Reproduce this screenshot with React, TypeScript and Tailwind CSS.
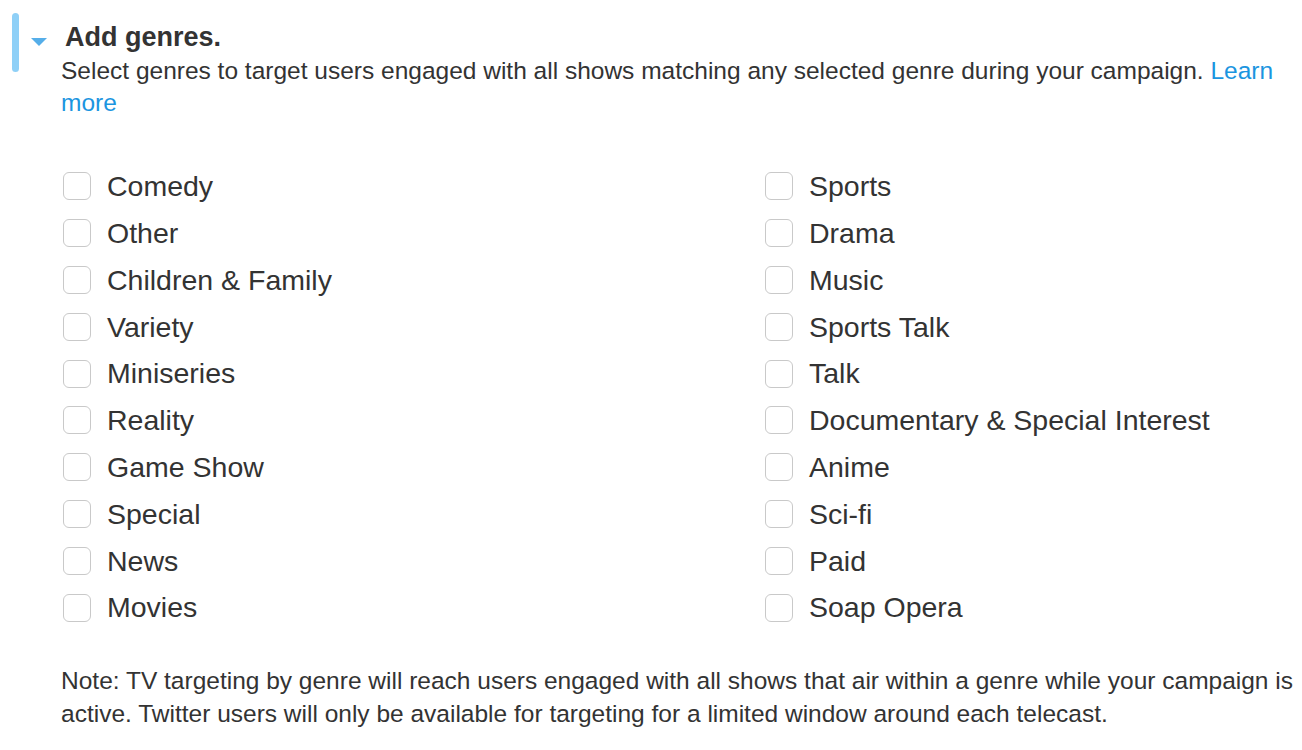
const leftGenres = [
  "Comedy",
  "Other",
  "Children & Family",
  "Variety",
  "Miniseries",
  "Reality",
  "Game Show",
  "Special",
  "News",
  "Movies",
];

const rightGenres = [
  "Sports",
  "Drama",
  "Music",
  "Sports Talk",
  "Talk",
  "Documentary & Special Interest",
  "Anime",
  "Sci-fi",
  "Paid",
  "Soap Opera",
];

const GenreOption = ({ label }: { label: string }) => (
  <label className="flex items-center h-[46.8px] pl-[2px] cursor-pointer">
    <span className="w-[28px] h-[28px] rounded-[6px] border border-[#c9c9c9] bg-white shrink-0" />
    <span className="ml-[16px] text-[28.5px] leading-none text-[#333333]">{label}</span>
  </label>
);

const App = () => {
  return (
    <div
      className="flex bg-white min-h-[750px] w-[1302px] text-[#333333]"
      style={{ fontFamily: '"Liberation Sans", Arial, sans-serif' }}
    >
      <div className="w-[61px] shrink-0 flex items-start">
        <div className="ml-[12px] mt-[13px] w-[7px] h-[59px] rounded-[4px] bg-[#8fd0f7]" />
        <svg className="ml-[12px] mt-[38px]" width="16" height="8" viewBox="0 0 16 8">
          <path d="M0 0 L16 0 L8 8 Z" fill="#55aee9" />
        </svg>
      </div>

      <div className="flex flex-col flex-1 min-w-0 pr-[2px]">
        <h2 className="mt-[22px] pl-[4px] text-[27px] leading-[30px] font-bold text-[#333333]">
          Add genres.
        </h2>
        <p className="mt-[3px] text-[24.5px] leading-[32px] pr-[10px]">
          Select genres to target users engaged with all shows matching any selected genre during your campaign.{" "}
          <a className="text-[#1b95e0]">Learn more</a>
        </p>

        <div className="mt-[44px] grid grid-cols-[702px_1fr]">
          <div className="flex flex-col">
            {leftGenres.map((g) => (
              <GenreOption key={g} label={g} />
            ))}
          </div>
          <div className="flex flex-col">
            {rightGenres.map((g) => (
              <GenreOption key={g} label={g} />
            ))}
          </div>
        </div>

        <p className="mt-[33px] text-[24.5px] leading-[33px]">
          Note: TV targeting by genre will reach users engaged with all shows that air within a genre while your campaign is
          active. Twitter users will only be available for targeting for a limited window around each telecast.
        </p>
      </div>
    </div>
  );
};

export default App;
